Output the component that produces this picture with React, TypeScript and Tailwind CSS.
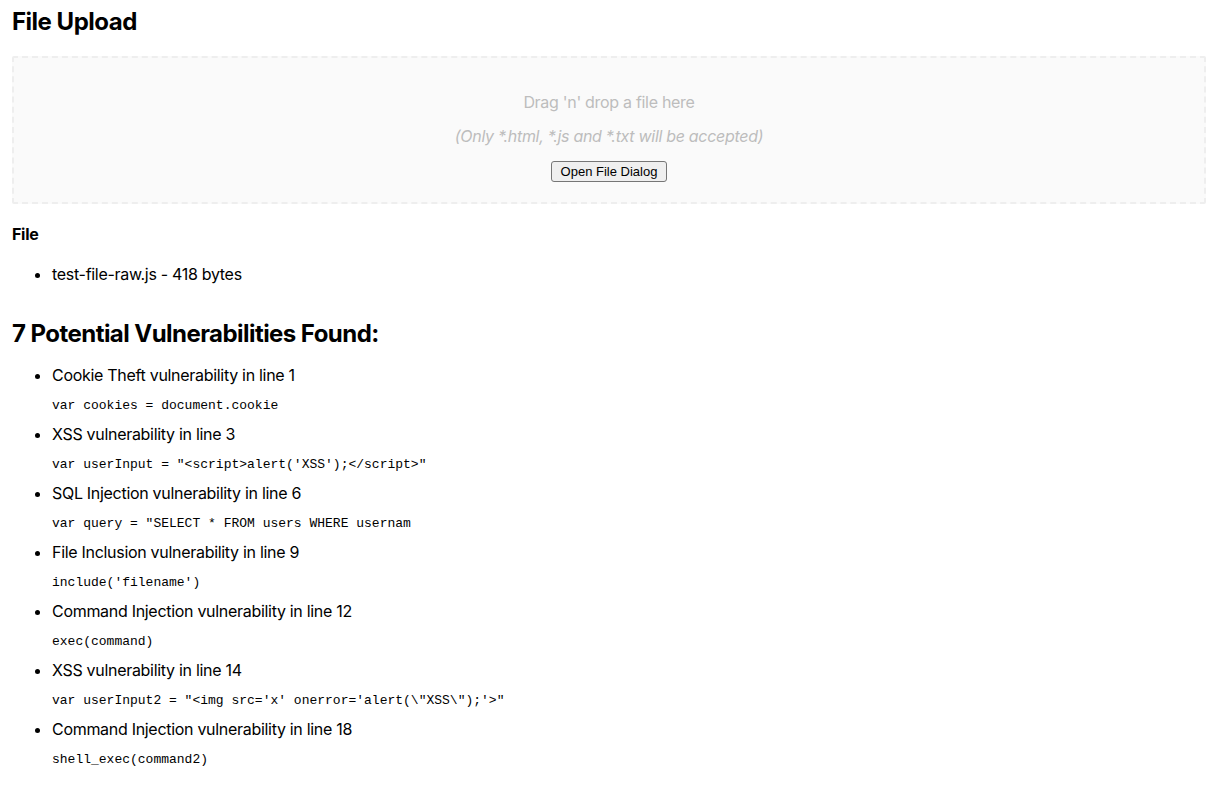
import React from "react";

type Finding = {
  label: string;
  code: string;
};

const findings: Finding[] = [
  { label: "Cookie Theft vulnerability in line 1", code: "var cookies = document.cookie" },
  { label: "XSS vulnerability in line 3", code: "var userInput = \"<script>alert('XSS');</script>\"" },
  { label: "SQL Injection vulnerability in line 6", code: "var query = \"SELECT * FROM users WHERE usernam" },
  { label: "File Inclusion vulnerability in line 9", code: "include('filename')" },
  { label: "Command Injection vulnerability in line 12", code: "exec(command)" },
  { label: "XSS vulnerability in line 14", code: "var userInput2 = \"<img src='x' onerror='alert(\\\"XSS\\\");'>\"" },
  { label: "Command Injection vulnerability in line 18", code: "shell_exec(command2)" },
];

const App = () => {
  return (
    <div className="min-h-screen bg-white pl-3 pr-[15px] text-black tracking-[-0.3px] font-['Inter','Liberation_Sans',sans-serif]">
      <h2 className="pt-[7px] mb-5 text-2xl leading-[29px] font-bold tracking-[-0.5px]">File Upload</h2>

      <div className="flex flex-col items-center rounded-[2px] border-2 border-dashed border-[#eeeeee] bg-[#fafafa] px-5 pt-[19px] pb-5 text-[#bdbdbd]">
        <p className="my-4 text-base leading-[18px]">Drag 'n' drop a file here</p>
        <p className="mb-4 text-base leading-[18px] italic">(Only *.html, *.js and *.txt will be accepted)</p>
        <button
          type="button"
          className="rounded-[3px] border border-[#767676] bg-[#efefef] px-[9px] py-[1px] text-[13px] leading-[17px] tracking-normal text-black font-['Liberation_Sans',Arial,sans-serif]"
        >
          Open File Dialog
        </button>
      </div>

      <h4 className="mt-[21px] mb-[21px] text-base leading-[19px] font-bold">File</h4>
      <ul className="list-disc pl-10 text-base leading-[19px]">
        <li>test-file-raw.js - 418 bytes</li>
      </ul>

      <h2 className="mt-[35px] mb-[18px] text-2xl leading-[29px] font-bold tracking-[-0.55px]">
        7 Potential Vulnerabilities Found:
      </h2>
      <ul className="list-disc pl-10 text-base">
        {findings.map((item) => (
          <li key={item.label} className="leading-[18px]">
            {item.label}
            <pre className="mt-[14px] mb-[12px] text-[13px] leading-[15px] tracking-normal font-['Liberation_Mono','Courier_New',monospace]">
              {item.code}
            </pre>
          </li>
        ))}
      </ul>
    </div>
  );
};

export default App;
